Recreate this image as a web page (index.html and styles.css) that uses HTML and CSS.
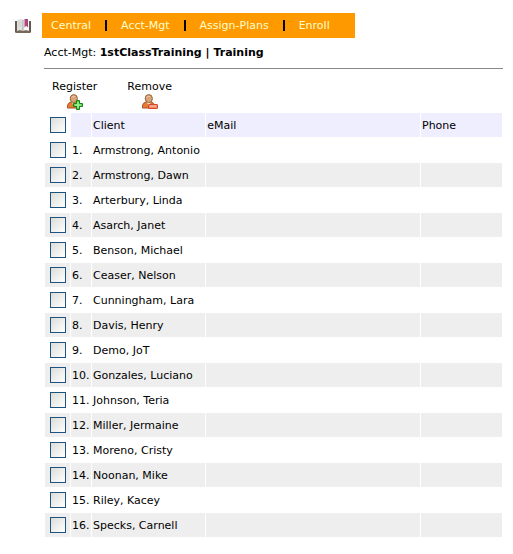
FILE: index.html
```
<!DOCTYPE html>
<html lang="en">
<head>
  <meta charset="UTF-8">
  <title>Acct-Mgt: 1stClassTraining</title>
  <link rel="stylesheet" href="styles.css">
</head>
<body>

  <div class="page">
    <a href="#" class="bookmark" aria-label="Guide">
      <svg width="18" height="16" viewBox="0 0 18 16">
        <path d="M1 3 H17 V13.5 Q17 15 15.5 15 H2.5 Q1 15 1 13.5 Z" fill="#65584f"/>
        <path d="M3 2 Q6.5 0 9 2 V13 Q6 11.5 3 13 Z" fill="#e0e0de"/>
        <path d="M9 2 Q11.5 0 15 2 V13 Q12 11.5 9 13 Z" fill="#f6f6f6"/>
        <path d="M4 4 H7.5 M4 6 H7.5 M4 8 H7.5" stroke="#cfcfcc"/>
        <path d="M9 2 V13" stroke="#a5a3a0"/>
        <path d="M10.5 1 H14 V9.5 L12.2 7.8 L10.5 9.5 Z" fill="#ad4582"/>
        <path d="M2 14 H16" stroke="#8b7866"/>
      </svg>
    </a>

    <div class="main">
      <nav class="menu">
        <a href="#">Central</a>
        <span class="bar"></span>
        <a href="#">Acct-Mgt</a>
        <span class="bar"></span>
        <a href="#">Assign-Plans</a>
        <span class="bar"></span>
        <a href="#">Enroll</a>
      </nav>

      <div class="content">
        <p class="title">Acct-Mgt: <b>1stClassTraining | Training</b></p>
        <hr>

        <div class="actions">
          <button type="button">
            Register
            <svg width="16" height="16" viewBox="0 0 16 16">
              <path d="M0.5 14 V12 Q0.5 8.8 4 8 H9 Q12.5 8.8 12.5 12 V14 Z" fill="#e77c32" stroke="#a65326"/>
              <path d="M4.5 8 L6.7 11.5 L9 8 Z" fill="#fae0c4"/>
              <ellipse cx="6.8" cy="4.6" rx="3.6" ry="4" fill="#d9a477" stroke="#95643f"/>
              <path d="M4.5 3.5 Q6 1.6 8 2.6" fill="none" stroke="#efc9a3"/>
              <path d="M9.5 6.5 H12.5 V9.5 H15.5 V12.5 H12.5 V15.5 H9.5 V12.5 H6.5 V9.5 H9.5 Z" fill="#5ed551" stroke="#16801b"/>
              <path d="M11 8 V14 M8 11 H14" stroke="#b4f5a7"/>
            </svg>
          </button>
          <button type="button">
            Remove
            <svg width="16" height="16" viewBox="0 0 16 16">
              <path d="M0.5 14 V12 Q0.5 8.8 4 8 H9 Q12.5 8.8 12.5 12 V14 Z" fill="#e77c32" stroke="#a65326"/>
              <path d="M4.5 8 L6.7 11.5 L9 8 Z" fill="#fae0c4"/>
              <ellipse cx="6.8" cy="4.6" rx="3.6" ry="4" fill="#d9a477" stroke="#95643f"/>
              <path d="M4.5 3.5 Q6 1.6 8 2.6" fill="none" stroke="#efc9a3"/>
              <rect x="6.5" y="10.5" width="9" height="4" rx="0.5" fill="#f58a69" stroke="#cf4a2c"/>
              <path d="M8 12 H14" stroke="#fcc1ab"/>
            </svg>
          </button>
        </div>

        <table class="clients">
          <thead>
            <tr>
              <td class="check"><input type="checkbox" aria-label="Select all"></td>
              <th class="num"></th>
              <th class="name">Client</th>
              <th>eMail</th>
              <th class="phone">Phone</th>
            </tr>
          </thead>
          <tbody>
            <tr><td><input type="checkbox" id="c1"></td><td>1.</td><td><label for="c1">Armstrong, Antonio</label></td><td></td><td></td></tr>
            <tr><td><input type="checkbox" id="c2"></td><td>2.</td><td><label for="c2">Armstrong, Dawn</label></td><td></td><td></td></tr>
            <tr><td><input type="checkbox" id="c3"></td><td>3.</td><td><label for="c3">Arterbury, Linda</label></td><td></td><td></td></tr>
            <tr><td><input type="checkbox" id="c4"></td><td>4.</td><td><label for="c4">Asarch, Janet</label></td><td></td><td></td></tr>
            <tr><td><input type="checkbox" id="c5"></td><td>5.</td><td><label for="c5">Benson, Michael</label></td><td></td><td></td></tr>
            <tr><td><input type="checkbox" id="c6"></td><td>6.</td><td><label for="c6">Ceaser, Nelson</label></td><td></td><td></td></tr>
            <tr><td><input type="checkbox" id="c7"></td><td>7.</td><td><label for="c7">Cunningham, Lara</label></td><td></td><td></td></tr>
            <tr><td><input type="checkbox" id="c8"></td><td>8.</td><td><label for="c8">Davis, Henry</label></td><td></td><td></td></tr>
            <tr><td><input type="checkbox" id="c9"></td><td>9.</td><td><label for="c9">Demo, JoT</label></td><td></td><td></td></tr>
            <tr><td><input type="checkbox" id="c10"></td><td>10.</td><td><label for="c10">Gonzales, Luciano</label></td><td></td><td></td></tr>
            <tr><td><input type="checkbox" id="c11"></td><td>11.</td><td><label for="c11">Johnson, Teria</label></td><td></td><td></td></tr>
            <tr><td><input type="checkbox" id="c12"></td><td>12.</td><td><label for="c12">Miller, Jermaine</label></td><td></td><td></td></tr>
            <tr><td><input type="checkbox" id="c13"></td><td>13.</td><td><label for="c13">Moreno, Cristy</label></td><td></td><td></td></tr>
            <tr><td><input type="checkbox" id="c14"></td><td>14.</td><td><label for="c14">Noonan, Mike</label></td><td></td><td></td></tr>
            <tr><td><input type="checkbox" id="c15"></td><td>15.</td><td><label for="c15">Riley, Kacey</label></td><td></td><td></td></tr>
            <tr><td><input type="checkbox" id="c16"></td><td>16.</td><td><label for="c16">Specks, Carnell</label></td><td></td><td></td></tr>
          </tbody>
        </table>
      </div>
    </div>
  </div>

</body>
</html>
```
FILE: styles.css
```
body {
  margin: 0;
  background: #fff;
  color: #000;
  font-family: Verdana, "DejaVu Sans", sans-serif;
  font-size: 11px;
  line-height: 14px;
}

.page {
  display: flex;
  padding: 13px 10px 16px 14px;
}

.bookmark {
  width: 28px;
  padding-top: 5px;
}

svg {
  display: block;
}

.main {
  flex: 1;
}

.menu {
  display: flex;
  align-items: center;
  gap: 14px;
  width: fit-content;
  height: 25px;
  padding: 0 25px 0 9px;
  background: #ff9900;
}

.menu a {
  color: #ffffcc;
  text-decoration: none;
}

.menu .bar {
  width: 2px;
  height: 11px;
  background: #000;
}

.content {
  padding-left: 2px;
}

.title {
  margin: 8px 0;
}

hr {
  height: 1px;
  margin: 0;
  border: 0;
  background: #888;
}

.actions {
  display: flex;
  gap: 30px;
  padding: 11px 0 2px 8px;
}

.actions button {
  display: flex;
  flex-direction: column;
  align-items: center;
  padding: 0;
  border: 0;
  background: none;
  color: #000;
  font: inherit;
  cursor: pointer;
}

.clients {
  width: 100%;
  table-layout: fixed;
  border-spacing: 1px;
}

.clients th,
.clients td {
  height: 24px;
  padding: 2px 0 0 1px;
  box-sizing: border-box;
  font-weight: normal;
  text-align: left;
  white-space: nowrap;
}

.clients th {
  background: #eeeeff;
}

.clients tbody tr:nth-child(even) td {
  background: #eee;
}

.clients tr td:first-child {
  padding: 0 0 0 5px;
}

.clients .check {
  width: 25px;
}

.clients .num {
  width: 20px;
}

.clients .name {
  width: 25%;
}

.clients .phone {
  width: 81px;
}

.clients input {
  appearance: none;
  display: block;
  width: 16px;
  height: 16px;
  margin: 0;
  border: 1px solid #1d5281;
  background: linear-gradient(135deg, #dcdcd7, #fff);
}

.clients input:checked {
  background: #1d5281;
}
```
